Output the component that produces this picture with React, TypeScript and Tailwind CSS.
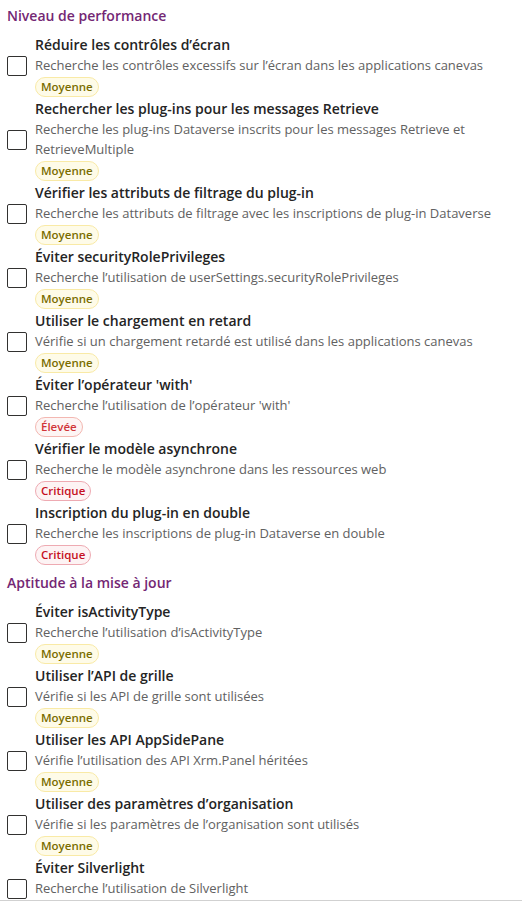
import React from 'react';

type Level = 'Moyenne' | 'Élevée' | 'Critique';

interface Rule {
  title: string;
  desc: string;
  level: Level;
}

interface Section {
  name: string;
  rules: Rule[];
}

const sections: Section[] = [
  {
    name: 'Niveau de performance',
    rules: [
      { title: 'Réduire les contrôles d’écran', desc: 'Recherche les contrôles excessifs sur l’écran dans les applications canevas', level: 'Moyenne' },
      { title: 'Rechercher les plug-ins pour les messages Retrieve', desc: 'Recherche les plug-ins Dataverse inscrits pour les messages Retrieve et RetrieveMultiple', level: 'Moyenne' },
      { title: 'Vérifier les attributs de filtrage du plug-in', desc: 'Recherche les attributs de filtrage avec les inscriptions de plug-in Dataverse', level: 'Moyenne' },
      { title: 'Éviter securityRolePrivileges', desc: 'Recherche l’utilisation de userSettings.securityRolePrivileges', level: 'Moyenne' },
      { title: 'Utiliser le chargement en retard', desc: 'Vérifie si un chargement retardé est utilisé dans les applications canevas', level: 'Moyenne' },
      { title: 'Éviter l’opérateur \'with\'', desc: 'Recherche l’utilisation de l’opérateur \'with\'', level: 'Élevée' },
      { title: 'Vérifier le modèle asynchrone', desc: 'Recherche le modèle asynchrone dans les ressources web', level: 'Critique' },
      { title: 'Inscription du plug-in en double', desc: 'Recherche les inscriptions de plug-in Dataverse en double', level: 'Critique' },
    ],
  },
  {
    name: 'Aptitude à la mise à jour',
    rules: [
      { title: 'Éviter isActivityType', desc: 'Recherche l’utilisation d’isActivityType', level: 'Moyenne' },
      { title: 'Utiliser l’API de grille', desc: 'Vérifie si les API de grille sont utilisées', level: 'Moyenne' },
      { title: 'Utiliser les API AppSidePane', desc: 'Vérifie l’utilisation des API Xrm.Panel héritées', level: 'Moyenne' },
      { title: 'Utiliser des paramètres d’organisation', desc: 'Vérifie si les paramètres de l’organisation sont utilisés', level: 'Moyenne' },
      { title: 'Éviter Silverlight', desc: 'Recherche l’utilisation de Silverlight', level: 'Moyenne' },
    ],
  },
];

function Badge({ level }: { level: Level }) {
  if (level === 'Moyenne') {
    return (
      <span className="inline-flex h-[20px] items-center rounded-full border border-[#f9eaa6] bg-[#fefbe8] px-[5px] text-[11.5px] font-semibold text-[#7a6d00]">
        {level}
      </span>
    );
  }
  if (level === 'Élevée') {
    return (
      <span className="inline-flex h-[20px] items-center rounded-full border border-[#f3b7b1] bg-[#fdf5f4] px-[5px] text-[11.5px] font-semibold text-[#d13438]">
        {level}
      </span>
    );
  }
  return (
    <span className="inline-flex h-[20px] items-center rounded-full border border-[#eeaab2] bg-[#fdf3f4] px-[5px] text-[11.5px] font-semibold text-[#c50f1f]">
      {level}
    </span>
  );
}

function RuleRow({ rule }: { rule: Rule }) {
  return (
    <div className="flex items-center gap-[8px] pb-[2px]">
      <div className="h-[20px] w-[20px] shrink-0 rounded-[2px] border border-[#323130] bg-white" />
      <div className="flex flex-col">
        <div className="text-[14px] font-semibold leading-[20px] text-[#242424]">{rule.title}</div>
        <div className="text-[13px] leading-[20px] text-[#616161]">{rule.desc}</div>
        <div className="mt-[2px] flex">
          <Badge level={rule.level} />
        </div>
      </div>
    </div>
  );
}

export default function App() {
  return (
    <div className="h-[902px] w-[522px] overflow-hidden bg-white font-['Segoe_UI','Open_Sans',sans-serif]">
      <div className="h-[901px] overflow-hidden border-b border-[#d1d1d1] px-[7px]">
        {sections.map((section) => (
          <div key={section.name}>
            <h2 className="mb-[3px] py-[6px] text-[14px] font-semibold leading-[20px] text-[#742774]">
              {section.name}
            </h2>
            {section.rules.map((rule) => (
              <RuleRow key={rule.title} rule={rule} />
            ))}
          </div>
        ))}
      </div>
    </div>
  );
}
